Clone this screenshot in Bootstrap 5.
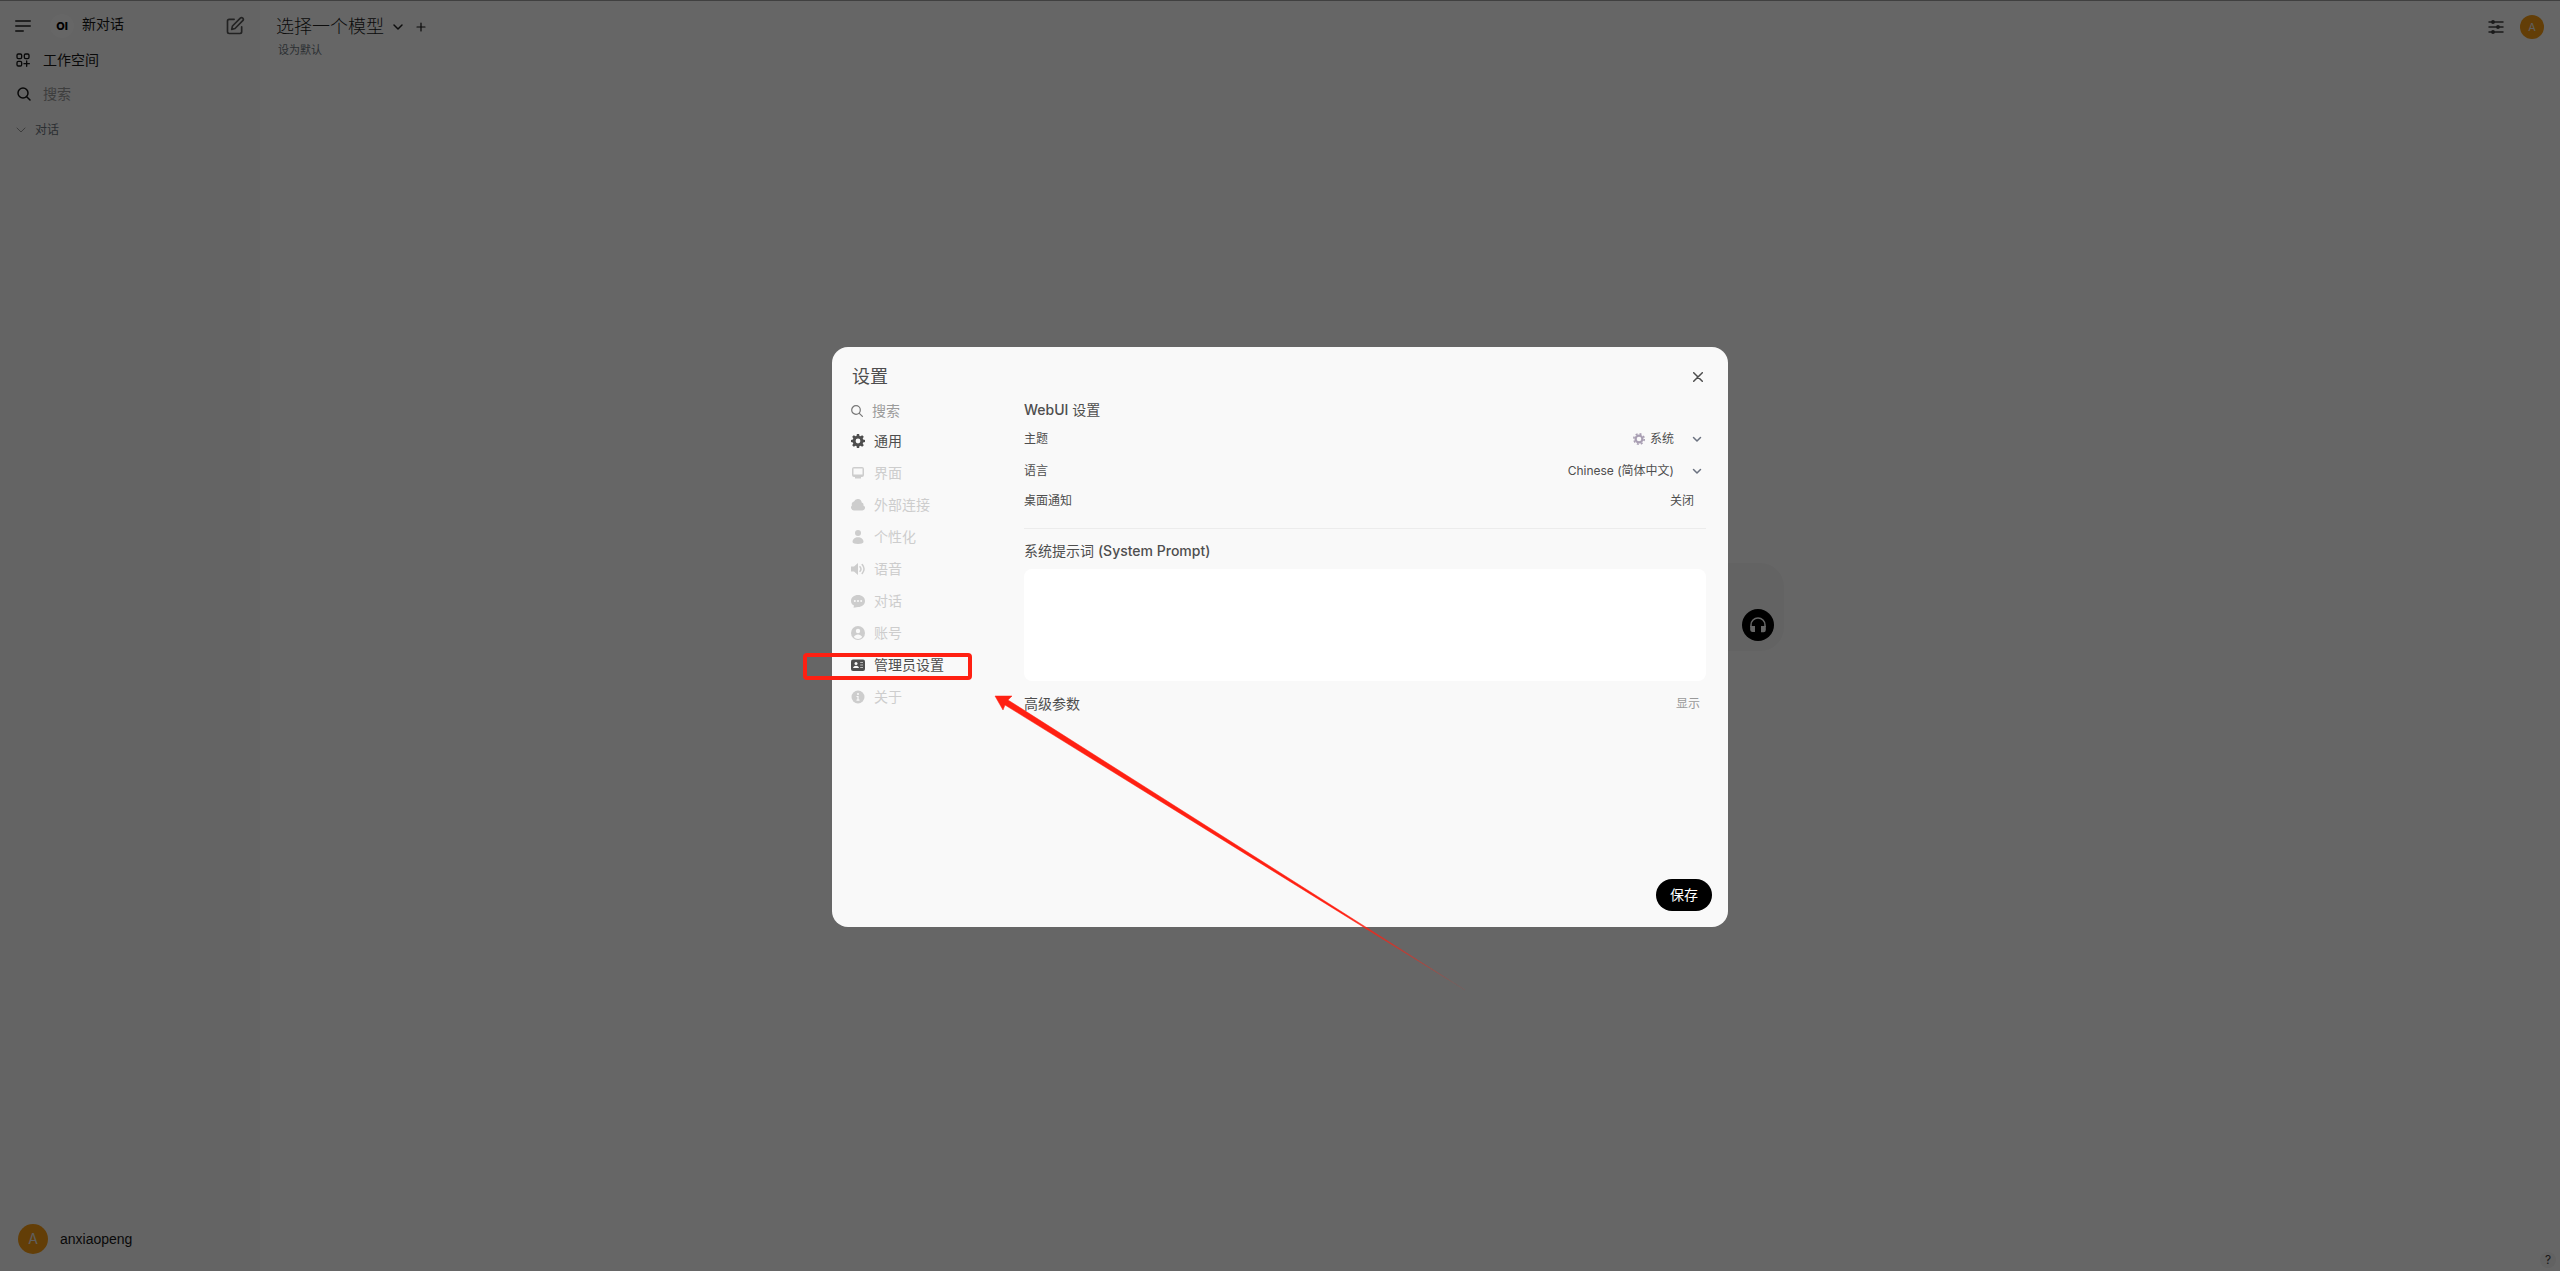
<!DOCTYPE html>
<html lang="zh-CN">
<head>
<meta charset="utf-8">
<meta name="viewport" content="width=device-width, initial-scale=1">
<title>Open WebUI</title>
<link rel="stylesheet" href="https://cdn.jsdelivr.net/npm/bootstrap@5.3.0/dist/css/bootstrap.min.css">
<script src="https://cdn.jsdelivr.net/npm/bootstrap@5.3.0/dist/js/bootstrap.bundle.min.js"></script>
<style>
  body { font-family: Inter, "Noto Sans CJK SC", sans-serif; font-size: 14px; line-height: 20px; color: #171717; background: #fff; }
  button, select, input, textarea { font: inherit; color: inherit; }
  svg { display: block; flex: none; }
  .ico { fill: none; stroke: currentColor; stroke-width: 2; stroke-linecap: round; stroke-linejoin: round; }
  .plain { background: none; border: 0; padding: 0; color: inherit; text-decoration: none; }
  .gray { color: #555; }
  .field { background: transparent; border: 0; padding: 0; outline: 0; min-width: 0; }
  .app { border-top: 1px solid #a0a0a0; }
  .side { width: 260px; background: #f9f9f9; padding: 8px 15px 17px; }
  .side-top { height: 34px; }
  .side-row { height: 34px; }
  .logo { width: 24px; height: 24px; border-radius: 50%; background: #fff; font-size: 11px; font-weight: 800; color: #000; margin-left: 3px; }
  .field::placeholder { color: #9b9b9b; opacity: 1; }
  .avatar { border-radius: 50%; background: #f89c12; color: #eee; }
  .a-lg { width: 30px; height: 30px; font-size: 14px; margin-left: 3px; }
  .a-sm { width: 24px; height: 24px; font-size: 11px; }
  .user { font-family: "Liberation Sans", sans-serif; }
  .t12 { font-size: 12px; line-height: 16px; }
  .t11 { font-size: 11px; line-height: 16px; }
  .t18 { font-size: 18px; line-height: 28px; }
  .head { padding: 12px 16px 0 16px; }
  .head-tools { height: 28px; }
  .model { color: #222; font-weight: 300; }
  .default-link { padding-left: 2px; margin-top: 1px; }
  .composer { width: 748px; height: 88px; border-radius: 24px; background: #f7f7f7; padding: 0 10px 10px 0; margin-bottom: 116px; }
  .call { width: 32px; height: 32px; border-radius: 50%; background: #000; color: #fff; }
  .help { width: 16px; height: 16px; border-radius: 50%; background: #f4f4f4; color: #444; right: 4px; bottom: 3px; }
  .shade { inset: 1px 0 0 0; background: rgba(0,0,0,.6); padding-top: 2px; }
  .shade::before { content: ""; position: absolute; left: 0; right: 0; top: -1px; height: 1px; background: rgba(0,0,0,.6); }
  .panel { width: 896px; max-width: 100%; border-radius: 16px; background: #f9f9f9; color: #4e4e4e; }
  .panel-head { padding: 16px 20px 0; }
  .panel-body { padding: 10px 16px 16px; min-height: 536px; }
  .tabs { width: 160px; padding-left: 3px; flex: none; }
  .tab { height: 20px; margin-bottom: 12px; gap: 9px; color: #cdcdcd; text-align: left; }
  .tab.on { color: #4e4e4e; }
  .find { height: 20px; margin-bottom: 10px; gap: 9px; }
  .find .ico { color: #777; }
  .pane { padding: 0 6px 0 16px; }
  .pane-title { font-size: 14px; line-height: 18px; margin-bottom: 12px; }
  .opt { height: 16px; }
  .pick { appearance: none; border: 0; background: transparent; text-align: right; padding: 0 32px 0 4px; outline: 0; }
  .pickbox { position: relative; }
  .pickbox .chev { position: absolute; right: 4px; top: 3px; color: #6b7280; pointer-events: none; }
  .notify { margin-top: 14px; }
  .rule { border-top: 1px solid #ececec; margin: 19px 0 12px; }
  .prompt { height: 112px; border: 0; border-radius: 8px; background: #fff; resize: none; outline: 0; padding: 8px 12px; }
  .advanced { padding-top: 13px; }
  .save { width: 56px; height: 32px; background: #000; color: #fff; border-radius: 16px; margin-right: -6px; }
  .muted { color: #999; }
  .note { position: absolute; left: -29px; top: 306px; pointer-events: none; overflow: visible; }
</style>
</head>
<body>
<div class="app d-flex vh-100 overflow-hidden">
  <aside class="side d-flex flex-column flex-shrink-0">
    <div class="side-top d-flex align-items-center">
      <button class="plain gray" aria-label="菜单"><svg class="ico" width="16" height="16" viewBox="0 0 16 16"><path d="M1 3h14M1 8h14M1 13h7"/></svg></button>
      <a class="plain d-flex align-items-center flex-grow-1 ms-3" href="#">
        <span class="logo d-flex align-items-center justify-content-center">OI</span>
        <span class="ms-2 mb-1 ps-0">新对话</span>
      </a>
      <button class="plain gray" aria-label="新建"><svg class="ico" width="20" height="20" viewBox="0 0 24 24"><path d="M11 4H5a2 2 0 0 0-2 2v13a2 2 0 0 0 2 2h13a2 2 0 0 0 2-2v-6"/><path d="M18.400 2.600a2 2 0 0 1 2.900 2.900L12 15l-4 1 1-4z"/></svg></button>
    </div>
    <a class="side-row plain d-flex align-items-center" href="#">
      <svg class="ico" width="16" height="16" viewBox="0 0 24 24"><rect x="3" y="3" width="7" height="7" rx="2"/><rect x="14" y="3" width="7" height="7" rx="2"/><rect x="3" y="14" width="7" height="7" rx="2"/><path d="M17.500 13.500v8M13.500 17.500h8"/></svg>
      <span class="ms-2 ps-1">工作空间</span>
    </a>
    <label class="side-row d-flex align-items-center">
      <svg class="ico" width="16" height="14" viewBox="-2 0 16 14" style="stroke-width:1.5"><circle cx="6" cy="6" r="5"/><path d="M9.700 9.700L13 13"/></svg>
      <input class="field ms-2 ps-1 flex-grow-1" type="text" placeholder="搜索" aria-label="搜索">
    </label>
    <button class="side-row plain t12 d-flex align-items-center pt-1 muted">
      <svg class="ico" width="12" height="8" viewBox="-2 0 12 8" style="stroke-width:1"><path d="M0 2l4 4 4-4"/></svg>
      <span class="ms-2 text-secondary">对话</span>
    </button>
    <a class="plain d-flex align-items-center mt-auto" href="#">
      <span class="avatar a-lg d-flex align-items-center justify-content-center">A</span>
      <span class="user ms-2 ps-1">anxiaopeng</span>
    </a>
  </aside>
  <main class="d-flex flex-column flex-grow-1 position-relative">
    <header class="head d-flex align-items-start">
      <div>
        <div class="d-flex align-items-center">
          <button class="plain model t18 d-flex align-items-center">选择一个模型
            <svg class="ico ms-2" width="12" height="12" viewBox="0 0 12 12" style="stroke-width:1.500"><path d="M2 4l4 4 4-4"/></svg></button>
          <button class="plain ms-2" aria-label="添加"><svg class="ico ms-1" width="10" height="10" viewBox="0 0 10 10" style="stroke-width:1.200"><path d="M5 1v8M1 5h8"/></svg></button>
        </div>
        <button class="plain default-link t11 text-secondary d-block">设为默认</button>
      </div>
      <div class="head-tools d-flex align-items-center ms-auto gap-3">
        <button class="plain" aria-label="控制"><svg class="ico" width="16" height="14" viewBox="0 0 16 14" style="stroke:#444;stroke-width:1.500"><path d="M1 2h14M1 7h14M1 12h14"/><g fill="#444"><circle cx="5" cy="2" r="1.200"/><circle cx="10" cy="7" r="1.200"/><circle cx="5" cy="12" r="1.200"/></g></svg></button>
        <button class="plain avatar a-sm d-flex align-items-center justify-content-center" style="background:#f89c12;color:#eee">A</button>
      </div>
    </header>
    <div class="flex-grow-1 d-flex align-items-center justify-content-center">
      <div class="composer d-flex align-items-end justify-content-end">
        <button class="plain call d-flex align-items-center justify-content-center" aria-label="通话"><svg width="18" height="18" viewBox="0 0 18 18"><path d="M2 11V9a7 7 0 0 1 14 0v2" fill="none" stroke="currentColor" stroke-width="1.500"/><path d="M1.200 10H6v6H3.500A2.300 2.300 0 0 1 1.200 14zM12 10h4.800v4a2.300 2.300 0 0 1-2.300 2.300H12z" fill="currentColor"/></svg></button>
      </div>
    </div>
    <button class="plain help t12 position-absolute d-flex align-items-center justify-content-center">?</button>
  </main>
</div>

<div class="shade position-fixed d-flex align-items-center justify-content-center">
  <section class="panel position-relative" role="dialog" aria-labelledby="title">
    <div class="panel-head d-flex align-items-center">
      <h1 class="t18 fw-normal m-0" id="title">设置</h1>
      <button class="plain ms-auto" aria-label="关闭窗口" style="padding-right:5px"><svg class="ico" width="10" height="10" viewBox="0 0 10 10" style="stroke-width:1.500"><path d="M0.700 0.700l8.600 8.600M9.300 0.700L0.700 9.300"/></svg></button>
    </div>
    <div class="panel-body d-flex">
      <nav class="tabs d-flex flex-column">
        <label class="find d-flex align-items-center">
          <svg class="ico" width="12" height="12" viewBox="0 0 12 12" style="stroke-width:1.200"><circle cx="5" cy="5" r="4.300"/><path d="M8.300 8.300L11.400 11.400"/></svg>
          <input class="field w-75" type="text" placeholder="搜索" aria-label="搜索设置">
        </label>
        <button class="plain tab on d-flex align-items-center"><svg width="14" height="14" viewBox="0 0 14 14" fill="currentColor"><path fill-rule="evenodd" d="M5.900 0h2.200l.4 1.900 1 .4L11.200 1.200l1.600 1.600-1.100 1.700.4 1 1.900.4v2.200l-1.900.4-.4 1 1.100 1.700-1.600 1.600-1.700-1.100-1 .4L8.100 14H5.900l-.4-1.900-1-.4-1.700 1.100-1.600-1.600 1.100-1.700-.4-1L0 8.100V5.900l1.900-.4.4-1L1.200 2.800l1.600-1.600 1.700 1.100 1-.4zM7 4.600a2.400 2.400 0 1 0 0 4.800 2.400 2.400 0 0 0 0-4.800z"/></svg>通用</button>
        <button class="plain tab d-flex align-items-center"><svg width="14" height="14" viewBox="0 0 14 14" fill="currentColor"><path fill-rule="evenodd" d="M3 1h8a2 2 0 0 1 2 2v6a2 2 0 0 1-2 2h-1v1.500H4V11H3a2 2 0 0 1-2-2V3a2 2 0 0 1 2-2zm-.5 1.500v6h9v-6z"/></svg>界面</button>
        <button class="plain tab d-flex align-items-center"><svg width="14" height="14" viewBox="0 0 14 14" fill="currentColor"><path d="M3 12.500a3 3 0 0 1-2-5.200A2.600 2.600 0 0 1 3 3.600a4 4 0 0 1 7.700.8A2.600 2.600 0 0 1 12.400 7.500a2.600 2.600 0 0 1-.9 5z"/></svg>外部连接</button>
        <button class="plain tab d-flex align-items-center"><svg width="14" height="14" viewBox="0 0 14 14" fill="currentColor"><circle cx="7" cy="3" r="3"/><path d="M1.500 12C1.500 9 4 7.300 7 7.300s5.500 1.700 5.500 4.700c0 1-2.500 2-5.500 2s-5.500-1-5.500-2z"/></svg>个性化</button>
        <button class="plain tab d-flex align-items-center"><svg width="14" height="14" viewBox="0 0 14 14"><path fill="currentColor" d="M0 4.500h3L7 1v12L3 9.500H0z"/><path d="M9 4.700q2 2.300 0 4.600M11.200 2.500q3.700 4.500 0 9" fill="none" stroke="currentColor" stroke-width="1.500" stroke-linecap="round"/></svg>语音</button>
        <button class="plain tab d-flex align-items-center"><svg width="14" height="14" viewBox="0 0 14 14"><path fill="currentColor" d="M7 1c4 0 7 2.500 7 6s-3 6-7 6l-4.500.8.500-2.200C1 10.500 0 9 0 7c0-3.500 3-6 7-6z"/><g fill="#f9f9f9"><circle cx="3.800" cy="7" r="1"/><circle cx="7" cy="7" r="1"/><circle cx="10.200" cy="7" r="1"/></g></svg>对话</button>
        <button class="plain tab d-flex align-items-center"><svg width="14" height="14" viewBox="0 0 14 14"><circle cx="7" cy="7" r="7" fill="currentColor"/><circle cx="7" cy="5" r="2.200" fill="#f9f9f9"/><path d="M2.800 11c.8-1.800 2.300-2.600 4.200-2.600s3.400.8 4.200 2.600C9 13.500 5 13.500 2.800 11z" fill="#f9f9f9"/></svg>账号</button>
        <button class="plain tab on d-flex align-items-center"><svg width="14" height="14" viewBox="0 0 14 14"><rect y="1.500" width="14" height="11.500" rx="2" fill="currentColor"/><circle cx="5" cy="5.400" r="1.500" fill="#f9f9f9"/><path d="M2 10c.4-1.600 1.600-2.300 3-2.300s2.600.7 3 2.300z" fill="#f9f9f9"/><path d="M9.200 4.500H12M9.200 7H12M9.200 9.500H12" stroke="#bbb"/></svg>管理员设置</button>
        <button class="plain tab d-flex align-items-center"><svg width="14" height="14" viewBox="0 0 14 14"><circle cx="7" cy="7" r="6.500" fill="currentColor"/><circle cx="7" cy="4" r="1" fill="#f9f9f9"/><path d="M5.500 6.500H7V10M5.500 10.200h3" fill="none" stroke="#f9f9f9" stroke-width="1.200"/></svg>关于</button>
      </nav>
      <form class="pane flex-grow-1 d-flex flex-column">
        <h2 class="pane-title fw-normal mt-0"><span class="fw-medium">WebUI</span> 设置</h2>
        <div class="opt t12 d-flex align-items-center mb-3">
          <label class="me-auto" for="theme">主题</label>
          <svg width="12" height="12" viewBox="0 0 12 12" fill="none" stroke="#a99fb3"><circle cx="6" cy="6" r="3.400" stroke-width="2.200"/><circle cx="6" cy="6" r="5.200" stroke-width="1.600" stroke-dasharray="2 2.080"/></svg>
          <span class="pickbox"><select class="pick" id="theme"><option>系统</option></select><svg class="ico chev" width="10" height="10" viewBox="0 0 10 10" style="stroke-width:1.500"><path d="M1.500 3.500L5 7l3.500-3.500"/></svg></span>
        </div>
        <div class="opt t12 d-flex align-items-center">
          <label class="me-auto" for="lang">语言</label>
          <span class="pickbox"><select class="pick" id="lang"><option>Chinese (简体中文)</option></select><svg class="ico chev" width="10" height="10" viewBox="0 0 10 10" style="stroke-width:1.500"><path d="M1.500 3.500L5 7l3.500-3.500"/></svg></span>
        </div>
        <div class="notify t12 d-flex align-items-center">
          <span class="me-auto">桌面通知</span>
          <button type="button" class="plain" style="padding-right:12px">关闭</button>
        </div>
        <div class="rule"></div>
        <label class="mb-2" for="prompt">系统提示词 <span class="fw-medium">(System Prompt)</span></label>
        <textarea class="prompt w-100" id="prompt"></textarea>
        <div class="advanced d-flex align-items-center">
          <span class="me-auto">高级参数</span>
          <button type="button" class="plain t12 muted" style="padding-right:6px">显示</button>
        </div>
        <button type="submit" class="plain save mt-auto ms-auto">保存</button>
      </form>
    </div>
    <svg class="note" width="700" height="340" viewBox="0 0 700 340" aria-hidden="true">
      <defs><linearGradient id="fade" gradientUnits="userSpaceOnUse" x1="540" y1="267" x2="650" y2="331"><stop offset="0" stop-color="#ff2012"/><stop offset="1" stop-color="#ff2012" stop-opacity=".1"/></linearGradient></defs>
      <rect x="2" y="2" width="165" height="23" rx="2" fill="none" stroke="#ff2012" stroke-width="4"/>
      <path d="M192 43L209 43L205 47L662 337L202 52L200 57Z" fill="url(#fade)" stroke="url(#fade)" stroke-width=".5"/>
    </svg>
  </section>
</div>
</body>
</html>
